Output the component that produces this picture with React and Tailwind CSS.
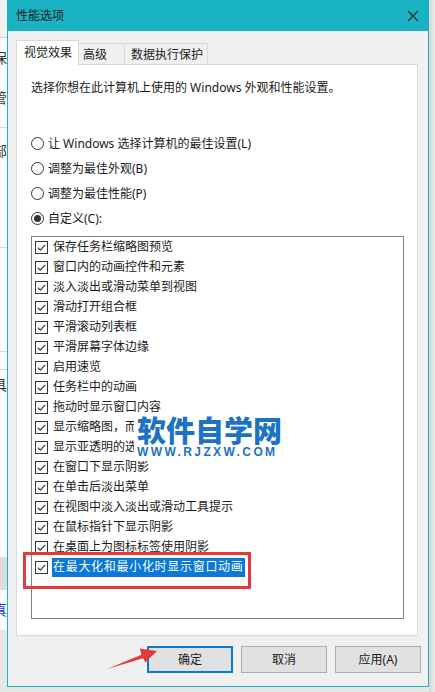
import React from "react";

const items = [
  "保存任务栏缩略图预览",
  "窗口内的动画控件和元素",
  "淡入淡出或滑动菜单到视图",
  "滑动打开组合框",
  "平滑滚动列表框",
  "平滑屏幕字体边缘",
  "启用速览",
  "任务栏中的动画",
  "拖动时显示窗口内容",
  "显示缩略图，而不是显示图标",
  "显示亚透明的选择长方形",
  "在窗口下显示阴影",
  "在单击后淡出菜单",
  "在视图中淡入淡出或滑动工具提示",
  "在鼠标指针下显示阴影",
  "在桌面上为图标标签使用阴影",
  "在最大化和最小化时显示窗口动画",
];

function Check() {
  return (
    <span className="w-[13px] h-[13px] border border-[#333] bg-white flex items-center justify-center shrink-0">
      <svg width="11" height="11" viewBox="0 0 11 11">
        <path d="M1.8 5.6 L4.2 8.1 L9.2 2.8" fill="none" stroke="#333" strokeWidth="1.2" />
      </svg>
    </span>
  );
}

function Radio({ on, label }) {
  return (
    <div className="h-[25px] flex items-center gap-[4px]">
      <span className="w-[13px] h-[13px] rounded-full border border-[#333] bg-white flex items-center justify-center shrink-0">
        {on && <span className="w-[7px] h-[7px] rounded-full bg-[#333]" />}
      </span>
      <span>{label}</span>
    </div>
  );
}

export default function App() {
  return (
    <div className="relative w-[435px] h-[692px] overflow-hidden bg-[#e6e6e6] flex text-[12px] leading-[16px] text-[#1a1a1a] font-['Noto_Sans','Noto_Sans_CJK_SC',sans-serif]">
      {/* background window strip */}
      <div className="w-[7px] shrink-0 h-full bg-white flex flex-col text-[14px] leading-[20px] text-[#333]">
        <div className="h-[38px] bg-[#f2f2f2] border-b border-[#d0d0d0]" />
        <div className="h-[40px] flex items-center justify-end overflow-hidden"><span className="shrink-0">保</span></div>
        <div className="h-[40px] flex items-center justify-end overflow-hidden"><span className="shrink-0">管</span></div>
        <div className="h-[10px] border-b border-[#d8d8d8]" />
        <div className="h-[46px] flex items-center justify-end overflow-hidden"><span className="shrink-0">部</span></div>
        <div className="h-[74px] border-b border-[#d8d8d8]" />
        <div className="h-[104px] border-b border-[#d8d8d8]" />
        <div className="h-[18px] border-b border-[#d8d8d8]" />
        <div className="h-[30px] flex items-center justify-end overflow-hidden"><span className="shrink-0">具</span></div>
        <div className="h-[157px]" />
        <div className="h-[33px] bg-[#dcdcdc]" />
        <div className="h-[40px] flex items-center justify-end overflow-hidden text-[#1a3fd0]"><span className="shrink-0">真</span></div>
        <div className="flex-1 bg-[#e6e6e6]" />
      </div>

      {/* dialog */}
      <div className="w-[422px] shrink-0 h-[687px] border-x border-b border-[#1ab3c3] bg-[#f0f0f0] flex flex-col">
        <div className="h-[31px] bg-[#1ab3c3] flex items-center justify-between pl-[8px] pr-[9px] shrink-0">
          <span className="text-[#1a1a1a]">性能选项</span>
          <svg width="12" height="12" viewBox="0 0 12 12">
            <path d="M1 1 L11 11 M11 1 L1 11" stroke="#1a2a2a" strokeWidth="1.1" />
          </svg>
        </div>

        {/* tabs */}
        <div className="ml-[8px] mt-[9px] flex items-end h-[25px] relative z-10">
          <div className="h-[25px] w-[63px] bg-white border border-b-0 border-[#d9d9d9] flex items-center pl-[7px] pb-[1px]">视觉效果</div>
          <div className="h-[22px] w-[46px] border border-l-0 border-b-0 border-[#d9d9d9] flex items-center pl-[4px]">高级</div>
          <div className="h-[22px] w-[83px] border border-l-0 border-b-0 border-[#d9d9d9] flex items-center pl-[6px]">数据执行保护</div>
        </div>

        {/* panel */}
        <div className="ml-[8px] w-[402px] h-[572px] -mt-px bg-white border border-[#d9d9d9] px-[14px] pt-[15px] flex flex-col">
          <div>选择你想在此计算机上使用的 Windows 外观和性能设置。</div>
          <div className="mt-[35px] flex flex-col">
            <Radio label="让 Windows 选择计算机的最佳设置(L)" />
            <Radio label="调整为最佳外观(B)" />
            <Radio label="调整为最佳性能(P)" />
            <Radio on label="自定义(C):" />
          </div>
          <div className="mt-[5px] w-[373px] h-[383px] border border-[#828282] bg-white flex flex-col">
            {items.map((t, i) => (
              <div key={i} className="h-[20px] shrink-0 flex items-center pl-[3px] gap-[4px]">
                <Check />
                {i === items.length - 1 ? (
                  <span className="bg-[#0a78d7] text-white px-[1px] h-[19px] flex items-center tracking-[0.7px]">{t}</span>
                ) : (
                  <span className="pl-[1px] whitespace-nowrap">{t}</span>
                )}
              </div>
            ))}
          </div>
        </div>

        {/* buttons */}
        <div className="mt-[10px] pr-[7px] flex justify-end gap-[8px]">
          <button className="w-[86px] h-[27px] bg-[#e1e1e1] border-2 border-[#0a78d7] flex items-center justify-center">确定</button>
          <button className="w-[86px] h-[27px] bg-[#e1e1e1] border border-[#adadad] flex items-center justify-center">取消</button>
          <button className="w-[86px] h-[27px] bg-[#e1e1e1] border border-[#adadad] flex items-center justify-center">应用(A)</button>
        </div>
      </div>

      {/* right shadow */}
      <div className="flex-1 h-full bg-gradient-to-r from-[#d4d4d4] to-[#ececec]" />

      {/* watermark */}
      <div className="absolute left-[134px] top-[413px] bg-white px-[3px] pb-[3px] flex flex-col items-start text-[#1d72c6] font-['Noto_Sans_CJK_SC',sans-serif]">
        <span className="text-[29px] leading-[33px] font-black tracking-[0px]">软件自学网</span>
        <span className="text-[12px] leading-[12px] font-bold tracking-[2.4px] font-['Liberation_Sans',sans-serif]">WWW.RJZXW.COM</span>
      </div>

      {/* red highlight box */}
      <div className="absolute left-[23px] top-[552px] w-[228px] h-[37px] border-[3px] border-[#e5393b]" />

      {/* red arrow */}
      <svg className="absolute left-0 top-0 pointer-events-none" width="435" height="692">
        <polygon points="107,669 141.5,654.7 139.8,648.6 157,651 145.2,662.4 143.2,658.3" fill="#e5393b" />
      </svg>
    </div>
  );
}
